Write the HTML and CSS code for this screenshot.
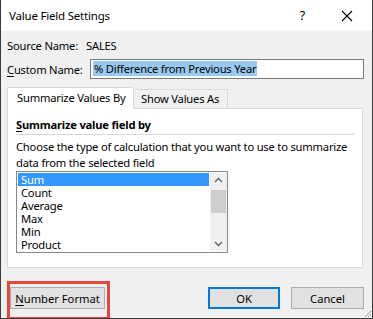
FILE: index.html
```html
<!DOCTYPE html>
<html lang="en">
<head>
<meta charset="UTF-8">
<title>Value Field Settings</title>
<link rel="stylesheet" href="styles.css">
</head>
<body>
<div class="dialog">
  <!-- title bar -->
  <div class="titlebar">
    <span class="title">Value Field Settings</span>
    <span class="help">?</span>
    <svg class="close" width="12" height="12" viewBox="0 0 12 12">
      <path d="M1 1L11 11M11 1L1 11" stroke="#000" stroke-width="1.1" fill="none"/>
    </svg>
  </div>

  <div class="content">
    <div class="source">
      <span class="lbl">Source Name:</span><span>SALES</span>
    </div>
    <div class="custom">
      <span class="lbl"><u>C</u>ustom Name:</span>
      <div class="edit"><span class="sel">% Difference from Previous Year</span></div>
    </div>

    <!-- tabs -->
    <div class="tabs">
      <div class="tab active">Summarize Values By</div>
      <div class="tab second">Show Values As</div>
    </div>
    <div class="panel">
      <div class="heading"><u>S</u>ummarize value field by</div>
      <div class="desc">Choose the type of calculation that you want to use to summarize data from the selected field</div>
      <div class="listbox">
        <div class="items">
          <div class="item selected">Sum</div>
          <div class="item">Count</div>
          <div class="item">Average</div>
          <div class="item">Max</div>
          <div class="item">Min</div>
          <div class="item">Product</div>
        </div>
        <div class="scroll">
          <svg width="17" height="14" viewBox="0 0 17 14"><path d="M5 9L8.5 5.5L12 9" stroke="#606060" stroke-width="1.4" fill="none"/></svg>
          <div class="thumb"></div>
          <div class="track"></div>
          <svg width="17" height="14" viewBox="0 0 17 14"><path d="M5 5L8.5 8.5L12 5" stroke="#606060" stroke-width="1.4" fill="none"/></svg>
        </div>
      </div>
    </div>

    <!-- buttons -->
    <div class="buttons">
      <button class="btn numfmt"><u>N</u>umber Format</button>
      <span class="spacer"></span>
      <button class="btn ok">OK</button>
      <button class="btn">Cancel</button>
    </div>
  </div>

  <div class="highlight"></div>
  <svg class="grip" width="8" height="8" viewBox="0 0 8 8">
    <path d="M7 1L1 7M7 4L4 7" stroke="#a0a0a0" stroke-width="1" fill="none"/>
  </svg>
</div>
</body>
</html>
```

FILE: styles.css
```css
body{margin:0;background:#fff;font-family:"Noto Sans","Open Sans",sans-serif;font-size:11.2px;letter-spacing:-0.2px;color:#000}
u{text-decoration:underline;text-underline-offset:2px}
.dialog{position:relative;width:373px;height:319px;box-sizing:border-box;
        border:1px solid #3c3c3c;border-top:none;display:flex;flex-direction:column;overflow:hidden}
/* title bar */
.titlebar{height:31px;background:#fff;display:flex;align-items:center;padding-left:8px;flex-shrink:0}
.title{font-size:11.5px;flex:1}
.help{font-size:12.5px;margin-right:36px}
.close{margin-right:19px}
/* body */
.content{flex:1;background:#f0f0f0;padding:0 8px 0 6px;display:flex;flex-direction:column}
.source{margin-top:7px;line-height:16px;display:flex;white-space:nowrap}
.source .lbl{width:79px;flex-shrink:0}
.custom{margin-top:5px;display:flex;align-items:center;height:20px;white-space:nowrap}
.custom .lbl{width:83px;flex-shrink:0}
.edit{flex:1;height:20px;box-sizing:border-box;border:1px solid #7a7a7a;background:#fff;
      padding:1px 2px;line-height:16px}
.sel{background:#99c9ef;padding:0 1px}
/* tabs */
.tabs{margin-top:8px;display:flex;align-items:flex-end;height:21px;position:relative;z-index:1;white-space:nowrap}
.tab{height:19px;box-sizing:border-box;border:1px solid #d9d9d9;border-bottom:none;background:#f0f0f0;line-height:18px}
.tab.active{width:126px;height:22px;background:#fff;margin-bottom:-1px;padding-left:9px;line-height:19px;border-right:none}
.tab.second{width:95px;padding-left:7px}
.panel{height:160px;box-sizing:border-box;margin-right:1px;border:1px solid #d9d9d9;background:#fff;padding:0 3px 0 8px}
.heading{margin-top:8px;margin-right:4px;line-height:16px;font-weight:bold;padding-bottom:1px;border-bottom:1px solid #d8d8d8}
.desc{margin-top:4px;line-height:16px}
.listbox{width:212px;height:82px;box-sizing:border-box;border:1px solid #828790;padding:1px 0 1px 1px;display:flex}
.items{flex:1}
.item{height:13px;line-height:13px;padding-left:3px;margin-right:1px}
.item.selected{background:#3399ff;color:#fff}
.scroll{width:17px;background:#f0f0f0;display:flex;flex-direction:column}
.scroll svg{display:block}
.thumb{height:23px;margin:3px 1px 0;background:#cdcdcd}
.track{flex:1}
/* buttons */
.buttons{margin-top:19px;display:flex;gap:11px}
.spacer{flex:1}
.btn{height:22px;width:73px;box-sizing:border-box;border:1px solid #adadad;background:#e1e1e1;
     font:inherit;color:#000;padding:0}
.btn.numfmt{width:95px;margin-left:3px}
.btn.ok{width:72px;border:2px solid #0078d7}
/* annotation frame */
.highlight{position:absolute;left:6px;top:281px;width:103px;height:39px;box-sizing:border-box;border:3px solid #e8473d}
.grip{position:absolute;right:0;bottom:0}
```
